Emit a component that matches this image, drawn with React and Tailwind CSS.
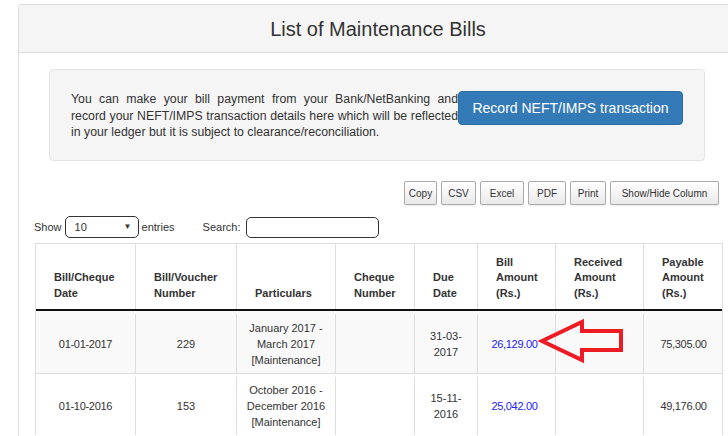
import React from "react";

const columns = [
    { label: ["Bill/Cheque", "Date"], w: "w-[99px]" },
    { label: ["Bill/Voucher", "Number"], w: "w-[101px]" },
    { label: ["Particulars"], w: "w-[99px]" },
    { label: ["Cheque", "Number"], w: "w-[79px]" },
    { label: ["Due", "Date"], w: "w-[63px]" },
    { label: ["Bill", "Amount", "(Rs.)"], w: "w-[78px]" },
    { label: ["Received", "Amount", "(Rs.)"], w: "w-[88px]" },
    { label: ["Payable", "Amount", "(Rs.)"], w: "w-[80px]" },
];

const bills = [
    {
        date: "01-01-2017",
        voucher: "229",
        particulars: ["January 2017 -", "March 2017", "[Maintenance]"],
        due: ["31-03-", "2017"],
        amount: "26,129.00",
        payable: "75,305.00",
    },
    {
        date: "01-10-2016",
        voucher: "153",
        particulars: ["October 2016 -", "December 2016", "[Maintenance]"],
        due: ["15-11-", "2016"],
        amount: "25,042.00",
        payable: "49,176.00",
    },
];

const exportButtons = [
    { label: "Copy", w: "w-[33px]" },
    { label: "CSV", w: "w-[35px]" },
    { label: "Excel", w: "w-[44px]" },
    { label: "PDF", w: "w-[38px]" },
    { label: "Print", w: "w-[36px]" },
    { label: "Show/Hide Column", w: "w-[109px]" },
];

function Lines({ lines }) {
    return lines.map((l, i) => <div key={i}>{l}</div>);
}

function App() {
    return (
        <div
            className="relative w-[728px] h-[436px] overflow-hidden bg-white text-[#333]"
            style={{ fontFamily: '"Liberation Sans", Arial, sans-serif' }}
        >
            <div className="pl-[18px] pt-[4px]">
                <div className="w-[720px] border border-[#ddd] rounded-t-[3px] h-[440px]">
                    <div className="h-[48px] bg-[#f5f5f5] border-b border-[#ddd] flex items-center justify-center text-[20px] text-[#333] rounded-t-[3px]">
                        List of Maintenance Bills
                    </div>

                    <div className="pt-[16px]">
                        <div className="ml-[30px] w-[656px] h-[92px] bg-[#f5f5f5] border border-[#e3e3e3] rounded-[4px] flex items-start pl-[21px] pt-[21px]">
                            <p className="w-[387px] text-[12.3px] leading-[16.5px] text-justify text-[#333]">
                                You can make your bill payment from your Bank/NetBanking and record your NEFT/IMPS transaction details here which will be reflected in your ledger but it is subject to clearance/reconciliation.
                            </p>
                            <button className="w-[225px] h-[34px] bg-[#337ab7] border border-[#2e6da4] rounded-[4px] text-white text-[14px]">
                                Record NEFT/IMPS transaction
                            </button>
                        </div>

                        <div className="flex justify-end gap-[4px] mt-[20px] w-[700px]">
                            {exportButtons.map((b) => (
                                <button
                                    key={b.label}
                                    className={`${b.w} h-[24px] text-[10px] text-[#333] border border-[#aaa] rounded-[2px] bg-gradient-to-b from-white to-[#e9e9e9] shadow-[0_1px_1px_rgba(0,0,0,0.08)]`}
                                >
                                    {b.label}
                                </button>
                            ))}
                        </div>

                        <div className="flex items-center mt-[11px] ml-[15px] h-[22px] text-[11px]">
                            <span>Show</span>
                            <div className="ml-[3px] w-[74px] h-[22px] border border-[#333] rounded-[5px] flex items-center justify-between pl-[9px] pr-[6px] text-[11px]">
                                <span>10</span>
                                <span className="text-[8px]">▼</span>
                            </div>
                            <span className="ml-[3px]">entries</span>
                            <span className="ml-[28px]">Search:</span>
                            <div className="ml-[6px] w-[133px] h-[21px] border border-[#333] rounded-[5px]"></div>
                        </div>

                        <div className="ml-[16px] mt-[5px] w-[688px] border border-[#ddd] border-b-0">
                            <div className="flex h-[67px] border-b-2 border-[#111]">
                                {columns.map((c, i) => (
                                    <div
                                        key={i}
                                        className={`${c.w} shrink-0 ${i > 0 ? "border-l border-[#ddd]" : ""} flex flex-col justify-end pl-[18px] pb-[8px] text-[11px] leading-[15.5px] font-bold`}
                                    >
                                        <Lines lines={c.label} />
                                    </div>
                                ))}
                            </div>
                            {bills.map((bill, r) => (
                                <div
                                    key={r}
                                    className={`flex h-[62px] pt-[3px] text-[11px] leading-[16px] text-center ${r % 2 === 0 ? "bg-[#f9f9f9]" : "bg-white"} ${r > 0 ? "border-t border-[#ddd]" : ""}`}
                                >
                                    <div className="w-[99px] shrink-0 flex items-center justify-center tracking-[-0.3px]">{bill.date}</div>
                                    <div className="w-[101px] shrink-0 border-l border-[#ddd] flex items-center justify-center">{bill.voucher}</div>
                                    <div className="w-[99px] shrink-0 border-l border-[#ddd] flex flex-col items-center justify-center">
                                        <Lines lines={bill.particulars} />
                                    </div>
                                    <div className="w-[79px] shrink-0 border-l border-[#ddd]"></div>
                                    <div className="w-[63px] shrink-0 border-l border-[#ddd] flex flex-col items-center justify-center">
                                        <Lines lines={bill.due} />
                                    </div>
                                    <div className="w-[78px] shrink-0 border-l border-[#ddd] flex items-center justify-center pr-[4px] tracking-[-0.3px] text-[#2222ee]">{bill.amount}</div>
                                    <div className="w-[88px] shrink-0 border-l border-[#ddd]"></div>
                                    <div className="w-[80px] shrink-0 border-l border-[#ddd] flex items-center justify-center tracking-[-0.3px]">{bill.payable}</div>
                                </div>
                            ))}
                        </div>
                    </div>
                </div>
            </div>

            {/* red annotation arrow over the first row */}
            <svg className="absolute left-[537px] top-[318px]" width="90" height="48" viewBox="0 0 90 48">
                <polygon
                    points="5,23 45,4 45,13 84,13 84,32 45,32 45,42"
                    fill="none"
                    stroke="#ed1c24"
                    strokeWidth="4"
                    strokeLinejoin="miter"
                />
            </svg>
        </div>
    );
}

export default App;
